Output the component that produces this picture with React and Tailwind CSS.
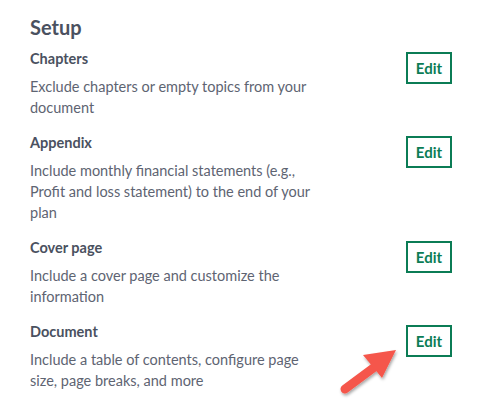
import React from 'react';

const sections = [
  {
    title: 'Chapters',
    lines: ['Exclude chapters or empty topics from your', 'document'],
  },
  {
    title: 'Appendix',
    lines: [
      'Include monthly financial statements (e.g.,',
      'Profit and loss statement) to the end of your',
      'plan',
    ],
  },
  {
    title: 'Cover page',
    lines: ['Include a cover page and customize the', 'information'],
  },
  {
    title: 'Document',
    lines: ['Include a table of contents, configure page', 'size, page breaks, and more'],
  },
];

function Arrow() {
  return (
    <svg
      className="absolute left-[330px] top-[340px] w-[80px] h-[67px] pointer-events-none"
      viewBox="0 0 80 67"
    >
      <defs>
        <filter id="sh" x="-30%" y="-30%" width="160%" height="160%">
          <feDropShadow dx="1" dy="2" stdDeviation="1.5" floodColor="#000" floodOpacity="0.35" />
        </filter>
      </defs>
      <g filter="url(#sh)">
        <line x1="15" y1="49" x2="46" y2="26" stroke="#f5574b" strokeWidth="9" strokeLinecap="round" />
        <polygon points="66,10 33,15 52,38" fill="#f5574b" />
      </g>
    </svg>
  );
}

export default function App() {
  return (
    <div className="relative w-[477px] h-[407px] bg-white overflow-hidden font-['Lato','Liberation_Sans',sans-serif]">
      <div className="pl-[30px] pr-[25px] pt-[13px]">
        <h1 className="text-[20px] leading-[28px] font-bold text-[#4a5160] mb-2">Setup</h1>

        <div className="flex flex-col">
          {sections.map((s, i) => (
            <div key={s.title} className={`flex justify-between items-start ${i > 0 ? 'mt-[15px]' : ''}`}>
              <div>
                <h2 className="text-[14.5px] leading-[20px] font-bold text-[#4a5160]">{s.title}</h2>
                <p className="mt-[7px] text-[14.5px] leading-[21px] text-[#5e6472]">
                  {s.lines.map((l) => (
                    <span key={l} className="block whitespace-nowrap">{l}</span>
                  ))}
                </p>
              </div>
              <button className="mt-[3px] w-[46px] h-[32px] border-2 border-[#0b7c55] text-[#0b7c55] text-[15px] font-bold flex items-center justify-center shrink-0">
                Edit
              </button>
            </div>
          ))}
        </div>
      </div>
      <Arrow />
    </div>
  );
}
